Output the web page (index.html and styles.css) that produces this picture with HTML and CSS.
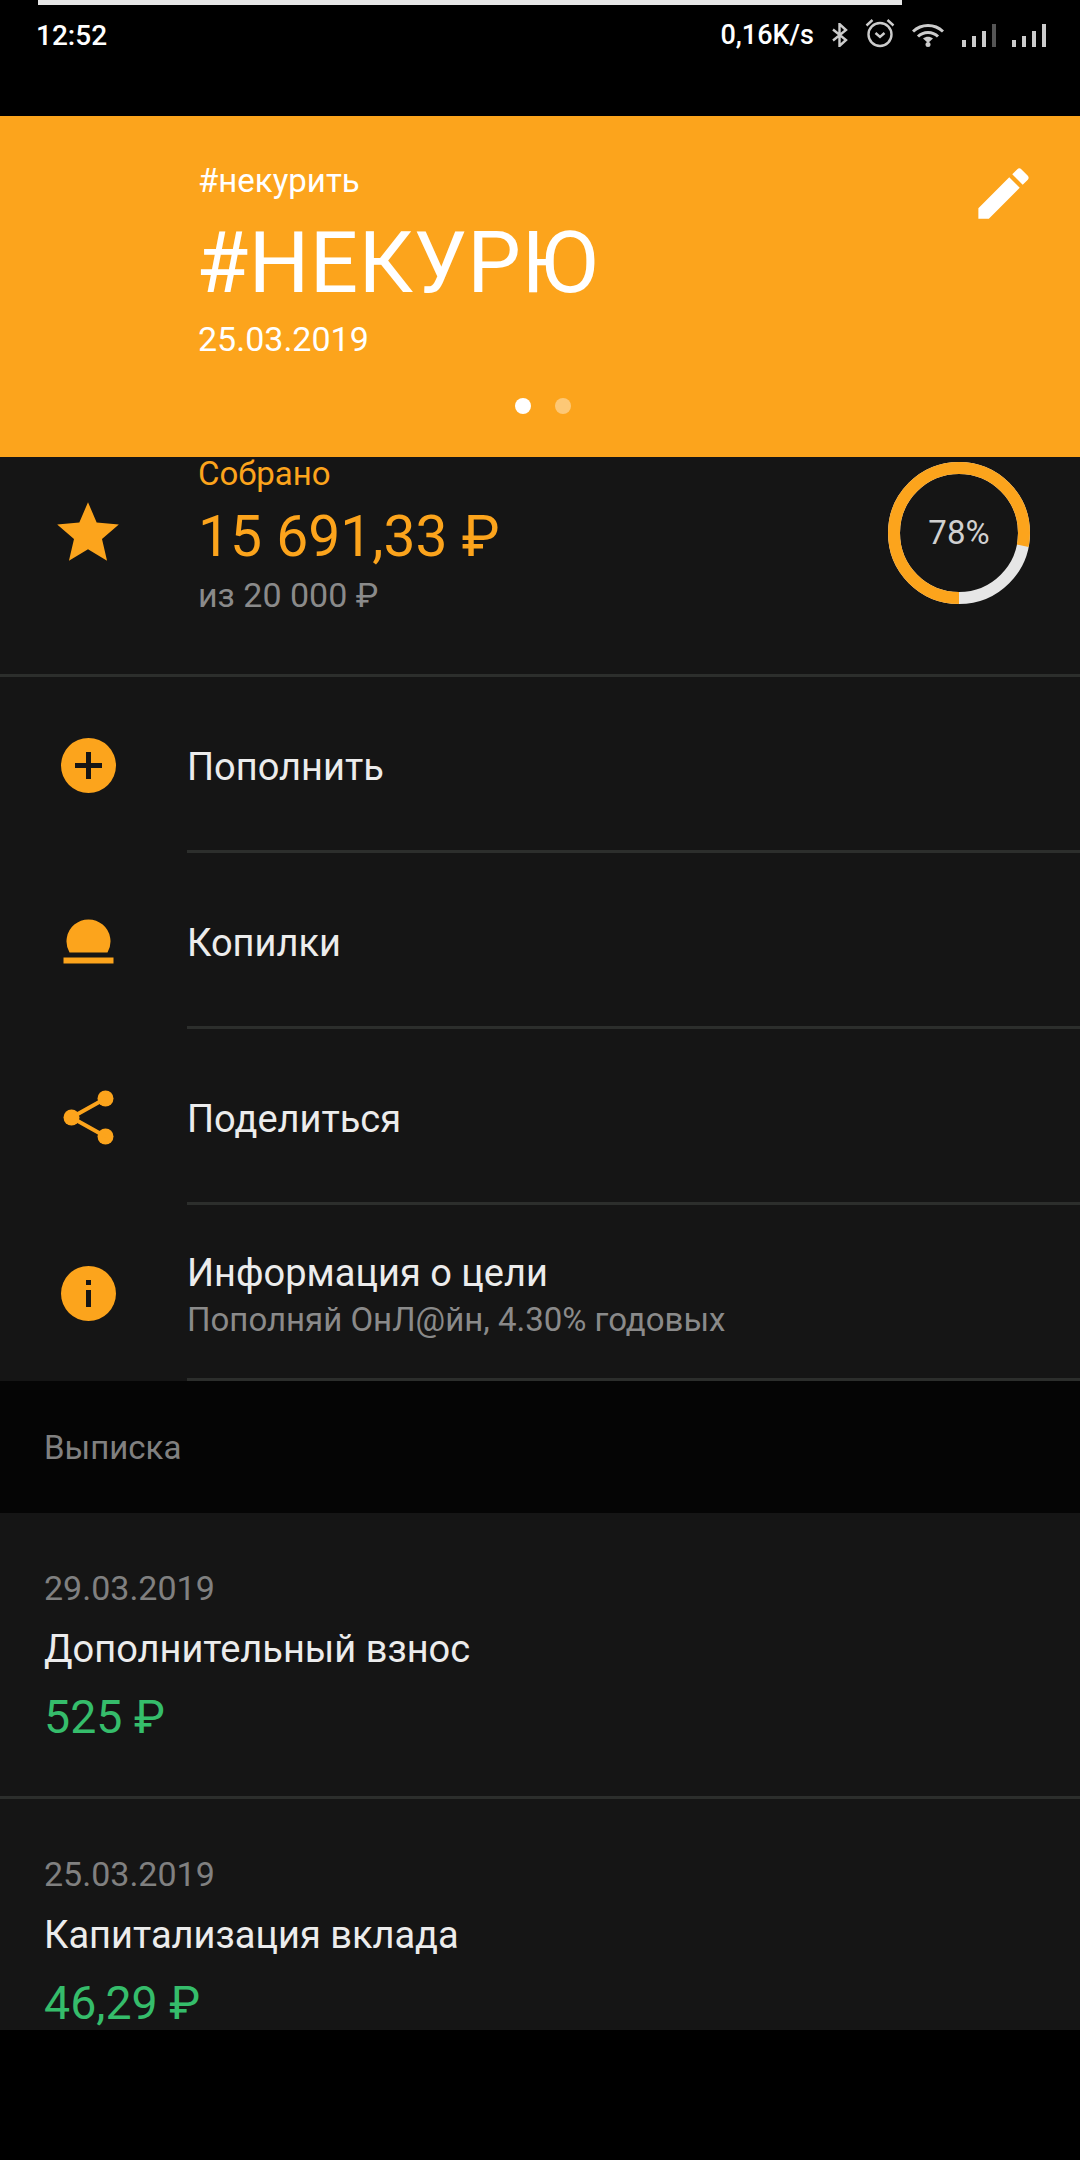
FILE: index.html
```html
<!DOCTYPE html>
<html lang="ru">
<head>
    <meta charset="UTF-8">
    <meta name="viewport" content="width=device-width, initial-scale=1.0">
    <title>#НЕКУРЮ</title>
    <link rel="stylesheet" href="styles.css">
</head>
<body>
    <div class="statusbar">
        <div class="loading"></div>
        <div class="status-row">
            <span class="time">12:52</span>
            <div class="status-right">
                <span class="speed">0,16K/s</span>
                <svg class="ico-bt" viewBox="0 0 20 24"><path d="M3 6.500 16 17 9.500 23V1L16 7 3 17.500" fill="none" stroke="#ccc" stroke-width="2.400"/></svg>
                <svg class="ico-alarm" viewBox="0 0 30 30"><g fill="none" stroke="#ccc" stroke-width="2.400"><circle cx="15" cy="16.500" r="11.500"/><path d="M1.500 7.500 7.500 2M28.500 7.500 22.500 2"/><path d="M10.500 15 15 19 19.500 15"/></g></svg>
                <svg class="ico-wifi" viewBox="0 0 32 24"><g fill="none" stroke="#ccc" stroke-width="3"><path d="M1 8.500C9.500 .5 22.500 .5 31 8.500"/><path d="M6 13.500C11.500 8 20.500 8 26 13.500"/></g><path d="M11 15.500C14 13 18 13 21 15.500L16 20z" fill="#ccc"/><circle cx="16" cy="21.500" r="2.500" fill="#ccc"/></svg>
                <svg class="ico-signal" viewBox="0 0 34 23"><g fill="#ccc"><rect x="0" y="16" width="4" height="7"/><rect x="10" y="12" width="4" height="11"/><rect x="20" y="7" width="4" height="16"/></g><rect x="30" y="0" width="4" height="23" fill="#555"/></svg>
                <svg class="ico-signal" viewBox="0 0 34 23"><g fill="#ccc"><rect x="0" y="16" width="4" height="7"/><rect x="10" y="12" width="4" height="11"/><rect x="20" y="7" width="4" height="16"/><rect x="30" y="0" width="4" height="23"/></g></svg>
            </div>
        </div>
    </div>

    <div class="hero">
        <div class="hero-top">
            <div>
                <div class="hero-tag">#некурить</div>
                <div class="hero-title">#НЕКУРЮ</div>
                <div class="hero-date">25.03.2019</div>
            </div>
            <svg class="ico-edit" viewBox="0 0 24 24"><path fill="#fff" d="M3 17.250V21h3.750L17.810 9.940l-3.750-3.750L3 17.250zM20.710 7.040c.39-.39.39-1.020 0-1.410l-2.340-2.340c-.39-.39-1.020-.39-1.410 0l-1.830 1.830 3.750 3.750 1.830-1.830z"/></svg>
        </div>
        <div class="dots">
            <span class="dot active"></span>
            <span class="dot"></span>
        </div>
    </div>

    <div class="panel">
        <div class="summary">
            <svg class="ico-star" viewBox="0 0 24 24"><path fill="#fca41c" d="M12 17.270 18.180 21l-1.640-7.030L22 9.240l-7.190-.61L12 2 9.190 8.630 2 9.240l5.460 4.730L5.820 21z"/></svg>
            <div class="summary-text">
                <div class="summary-label">Собрано</div>
                <div class="summary-amount">15 691,33 ₽</div>
                <div class="summary-goal">из 20 000 ₽</div>
            </div>
            <div class="ring">
                <svg viewBox="0 0 144 144">
                    <circle cx="72" cy="72" r="65" fill="none" stroke="#e6e6e6" stroke-width="12"/>
                    <circle cx="72" cy="72" r="65" fill="none" stroke="#fca41c" stroke-width="12" stroke-dasharray="318.600 408.400" transform="rotate(90 72 72)"/>
                </svg>
                <span class="ring-text">78%</span>
            </div>
        </div>

        <div class="menu-row">
            <div class="menu-icon">
                <svg class="ico-55" viewBox="0 0 55 55"><circle cx="27.500" cy="27.500" r="27.500" fill="#fca41c"/><path d="M14 27.500h27M27.500 14v27" stroke="#151515" stroke-width="5" fill="none"/></svg>
            </div>
            <div class="menu-body"><span class="menu-title">Пополнить</span></div>
        </div>
        <div class="menu-row">
            <div class="menu-icon">
                <svg class="ico-55" viewBox="0 0 55 55"><path d="M8.500 38.500A22 22 0 1 1 46.500 38.500z" fill="#fca41c"/><rect x="2.500" y="43.500" width="50" height="6" fill="#fca41c"/></svg>
            </div>
            <div class="menu-body"><span class="menu-title">Копилки</span></div>
        </div>
        <div class="menu-row">
            <div class="menu-icon">
                <svg class="ico-55" viewBox="0 0 55 55"><g fill="#fca41c"><circle cx="44.500" cy="8.500" r="8"/><circle cx="10.500" cy="27.500" r="8"/><circle cx="44.500" cy="46.500" r="8"/></g><path d="M44.500 8.500 10.500 27.500 44.500 46.500" fill="none" stroke="#fca41c" stroke-width="4"/></svg>
            </div>
            <div class="menu-body"><span class="menu-title">Поделиться</span></div>
        </div>
        <div class="menu-row">
            <div class="menu-icon">
                <svg class="ico-55" viewBox="0 0 55 55"><circle cx="27.500" cy="27.500" r="27.500" fill="#fca41c"/><path d="M25 14h5v5h-5zM25 24h5v17h-5z" fill="#151515"/></svg>
            </div>
            <div class="menu-body">
                <span class="menu-title">Информация о цели</span>
                <span class="menu-sub">Пополняй ОнЛ@йн, 4.30% годовых</span>
            </div>
        </div>

        <div class="section-head">Выписка</div>

        <div class="operations">
            <div class="operation">
                <div class="op-date">29.03.2019</div>
                <div class="op-title">Дополнительный взнос</div>
                <div class="op-sum">525 ₽</div>
            </div>
            <div class="operation">
                <div class="op-date">25.03.2019</div>
                <div class="op-title">Капитализация вклада</div>
                <div class="op-sum">46,29 ₽</div>
            </div>
        </div>
    </div>
</body>
</html>
```

FILE: styles.css
```css
html, body {
    margin: 0;
    padding: 0;
    background-color: #000;
}

body {
    width: 1080px;
    height: 2160px;
    overflow: hidden;
    font-family: 'Roboto', 'Liberation Sans', sans-serif;
    color: #ececec;
}

/* status bar */
.statusbar {
    height: 116px;
    box-sizing: border-box;
}

.loading {
    height: 5px;
    margin: 0 178px 0 38px;
    background-color: #e6e6e6;
}

.status-row {
    display: flex;
    justify-content: space-between;
    align-items: center;
    height: 44px;
    padding: 8px 34px 0 36px;
}

.time, .speed {
    font-size: 27px;
    font-weight: 500;
    color: #fff;
}

.time {
    font-size: 28px;
}

.status-right {
    display: flex;
    align-items: center;
}

.ico-bt {
    width: 20px;
    height: 24px;
    margin-left: 16px;
}

.ico-alarm {
    width: 30px;
    height: 30px;
    margin-left: 15px;
    margin-top: -4px;
}

.ico-wifi {
    width: 32px;
    height: 24px;
    margin-left: 17px;
}

.ico-signal {
    width: 34px;
    height: 23px;
    margin-left: 18px;
}

.ico-signal + .ico-signal {
    margin-left: 16px;
}

/* orange card */
.hero {
    height: 341px;
    box-sizing: border-box;
    padding: 46px 0 0 198px;
    background-color: #fca41c;
    color: #fff;
}

.hero-top {
    display: flex;
    justify-content: space-between;
    align-items: flex-start;
    height: 225px;
}

.hero-tag {
    font-size: 33px;
    line-height: 38px;
}

.hero-title {
    font-size: 85px;
    font-weight: 400;
    line-height: 100px;
    letter-spacing: 0.4px;
    margin: 13px 0 0 -2px;
}

.hero-date {
    font-size: 34px;
    line-height: 38px;
    margin-top: 7px;
}

.ico-edit {
    width: 67px;
    height: 67px;
    margin: -2px 43px 0 0;
}

.dots {
    display: flex;
    justify-content: center;
    gap: 24px;
    margin-left: -192px;
    margin-top: 11px;
}

.dot {
    width: 16px;
    height: 16px;
    border-radius: 50%;
    background-color: #fff;
    opacity: 0.4;
}

.dot.active {
    opacity: 1;
}

/* dark content */
.panel {
    height: 1573px;
    background-color: #151515;
}

.summary {
    display: flex;
    height: 220px;
    box-sizing: border-box;
    border-bottom: 3px solid #2c2e2c;
}

.ico-star {
    width: 74px;
    height: 74px;
    margin: 39px 0 0 51px;
    flex: none;
}

.summary-text {
    margin-left: 73px;
    flex: 1;
}

.summary-label {
    font-size: 33px;
    line-height: 32px;
    padding-top: 1px;
    color: #fca41c;
}

.summary-amount {
    font-size: 57px;
    line-height: 66px;
    margin-top: 14px;
    color: #fca41c;
}

.summary-goal {
    font-size: 34px;
    line-height: 38px;
    margin-top: 6px;
    color: #8a8a8a;
}

.ring {
    position: relative;
    width: 144px;
    height: 144px;
    margin: 4px 49px 0 0;
}

.ring svg {
    display: block;
}

.ring-text {
    position: absolute;
    top: 0;
    left: 0;
    width: 144px;
    line-height: 144px;
    text-align: center;
    font-size: 33px;
    color: #d0d0d0;
}

.menu-row {
    display: flex;
    height: 176px;
}

.menu-icon {
    flex: none;
    width: 187px;
    box-sizing: border-box;
    padding-right: 11px;
    display: flex;
    align-items: center;
    justify-content: center;
}

.ico-55 {
    width: 55px;
    height: 55px;
}

.menu-body {
    flex: 1;
    display: flex;
    flex-direction: column;
    justify-content: center;
    padding-top: 6px;
    border-bottom: 3px solid #2c2e2c;
}

.menu-title {
    font-size: 38px;
    line-height: 44px;
}

.menu-sub {
    font-size: 33px;
    line-height: 38px;
    margin-top: 6px;
    color: #8a8a8a;
}

.section-head {
    height: 132px;
    line-height: 134px;
    padding-left: 44px;
    font-size: 33px;
    color: #808080;
    background-color: #050505;
}

/* the list is scrolled, the last row is cut by the bottom of the panel */
.operations {
    height: 517px;
    overflow: hidden;
}

.operation {
    height: 286px;
    box-sizing: border-box;
    padding: 56px 0 0 44px;
    border-bottom: 3px solid #2c2e2c;
}

.op-date {
    font-size: 34px;
    line-height: 38px;
    color: #808080;
}

.op-title {
    font-size: 38px;
    line-height: 44px;
    margin-top: 20px;
}

.op-sum {
    font-size: 46.500px;
    line-height: 54px;
    margin-top: 19px;
    color: #35bd6b;
}
```
